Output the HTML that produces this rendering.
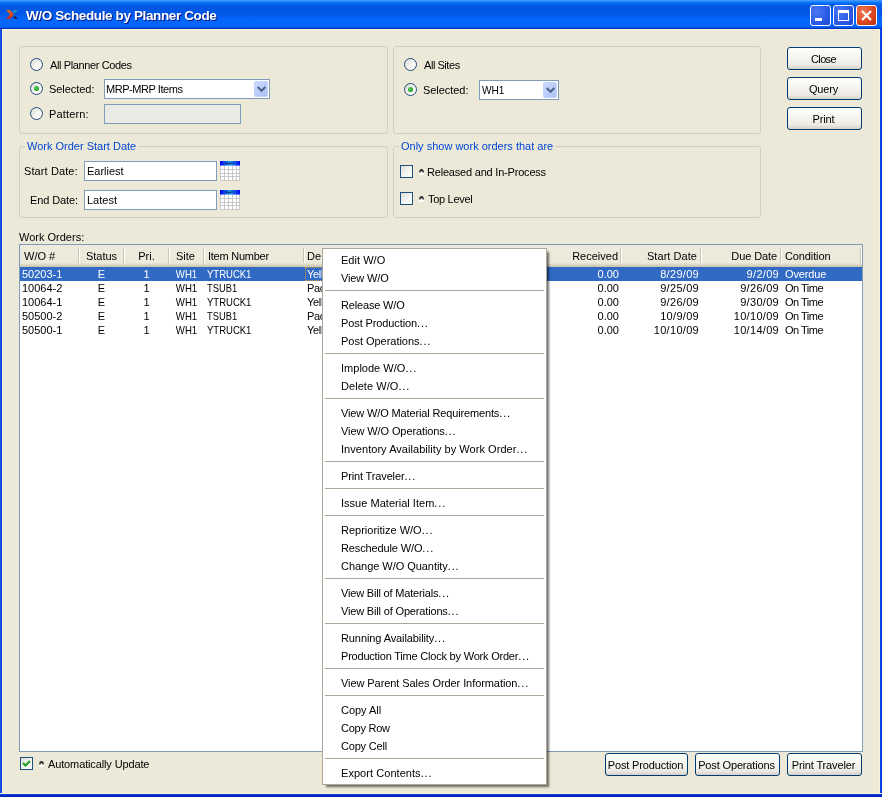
<!DOCTYPE html>
<html><head><meta charset="utf-8"><title>W/O Schedule by Planner Code</title>
<style>
*{box-sizing:border-box;margin:0;padding:0}
html,body{width:882px;height:797px;overflow:hidden}
body{background:#ECE9D8;font-family:"Liberation Sans","DejaVu Sans",sans-serif;font-size:11px;color:#000;position:relative;line-height:13px}
.abs,.t,.grp,.radio,.chk,.btn,.field,.combo,.hs{position:absolute}
.t{white-space:nowrap;height:13px;line-height:13px}
#title{left:0;top:0;width:882px;height:29px;position:absolute;
background:linear-gradient(to bottom,#4198FF 0px,#3E96FF 1px,#0A7BFF 2px,#056AF3 3.5px,#035CE6 5px,#0257E2 7px,#0259E8 14px,#0366FB 20px,#0367FD 26px,#0456E8 27.5px,#0234C4 28.5px,#0234C4 29px);}
#title .cap{position:absolute;left:26px;top:7px;font-weight:bold;font-size:13.5px;line-height:17px;color:#fff;letter-spacing:-0.38px;text-shadow:1px 1px 0 #0A1883;white-space:nowrap}
.bl{position:absolute;left:0;top:29px;width:3px;height:768px;background:linear-gradient(to right,#1C54E6 0,#1C54E6 1px,#0842E2 1px,#0842E2 2px,#F7F2D8 2px,#F7F2D8 3px)}
.br{position:absolute;left:879px;top:29px;width:3px;height:768px;background:linear-gradient(to right,#F7F2D8 0,#F7F2D8 1px,#0E4FE6 1px,#0831D9 3px)}
.bb{position:absolute;left:0;top:793px;width:882px;height:4px;background:linear-gradient(to bottom,#F7F2D8 0,#F7F2D8 1px,#0E4FE6 1px,#0831D9 2px,#001EA0 4px)}
.tb{position:absolute;top:5px;width:21px;height:21px;border:1px solid #fff;border-radius:3px;background:radial-gradient(circle at 30% 30%,#4A7AF2 0,#2A5AE4 60%,#1A46CE 100%)}
.tb.x{background:radial-gradient(circle at 30% 30%,#EC7A55 0,#D8441C 60%,#B8300E 100%)}
.grp{border:1px solid #D0D0BF;border-radius:3px}
.grp .gt{position:absolute;top:-7px;left:5px;background:#ECE9D8;padding:0 2px;color:#0046D5;height:13px;line-height:13px;white-space:nowrap}
.radio{width:13px;height:13px;border-radius:50%;border:1px solid #21497B;background:linear-gradient(135deg,#DCDCD5 0,#F6F6F2 55%,#fff 100%)}
.radio.on::after{content:"";position:absolute;left:3px;top:3px;width:5px;height:5px;border-radius:50%;background:radial-gradient(circle at 40% 40%,#5CD65C 0,#21A121 60%,#1A7E1A 100%)}
.chk{width:13px;height:13px;border:1px solid #1C5180;background:linear-gradient(135deg,#DCDCD7 0,#F3F3EF 50%,#fff 100%)}
.field{border:1px solid #7F9DB9;background:#fff;height:20px}
.field .t{left:2px;top:3px}
.combo{border:1px solid #7F9DB9;background:#fff;height:20px}
.combo .t{left:2px;top:3px}
.combo .dd{position:absolute;right:1px;top:1px;width:14px;height:16px;border-radius:2px;border:1px solid #C4D3FB;background:linear-gradient(135deg,#CCD9FD 0,#BDCDFB 50%,#ABC0F7 100%)}
.btn{height:23px;border:1px solid #003C74;border-radius:3px;background:linear-gradient(to bottom,#fff 0,#F7F6F1 40%,#ECEBE5 80%,#D6D0C5 100%);text-align:center;line-height:23px;white-space:nowrap;letter-spacing:-0.15px;padding-right:2px}
#tbl{position:absolute;left:19px;top:244px;width:844px;height:508px;border:1px solid #7F9DB9;background:#fff}
#hdr{position:absolute;left:0;top:0;width:842px;height:22px;background:linear-gradient(to bottom,#EBEADB 0,#EBEADB 18px,#E6E3D2 18px,#E6E3D2 19px,#DEDAC8 19px,#DEDAC8 20px,#D5D0BC 20px,#D5D0BC 21px,#CBC6B2 21px,#CBC6B2 22px)}
.hs{top:3px;width:2px;height:15px;background:linear-gradient(to right,#C7C5B2 0,#C7C5B2 1px,#fff 1px)}
.row{position:absolute;left:0;width:842px;height:14px}
.row .t{top:1px}
.row .sq{transform-origin:0 50%}
.row.sel{background:#316AC5;color:#fff}
#menu{position:absolute;left:322px;top:248px;width:225px;height:537px;background:#fff;border:1px solid #ACA899;box-shadow:3px 3px 2px -1px rgba(0,0,0,.55);padding:2px 0}
#menu .mi{height:18px;line-height:18px;padding-left:18px;white-space:nowrap}
#menu .e{letter-spacing:.85px}
#menu .ms{height:9px;position:relative}
#menu .ms::after{content:"";position:absolute;left:2px;right:2px;top:3px;height:1px;background:#ACA899}
</style></head><body><div id="all" style="position:absolute;left:0;top:0;width:882px;height:797px;will-change:transform">
<div id="title">
<svg class="abs" style="left:5px;top:9px" width="14" height="11" viewBox="0 0 14 11"><defs><linearGradient id="g1" x1="0" y1="0" x2="0" y2="1"><stop offset="0" stop-color="#DC701C"/><stop offset="1" stop-color="#C8221C"/></linearGradient></defs><path d="M1 1 L5 1 L9 5.5 L5 10 L1 10 L5 5.5 Z" fill="url(#g1)"/><path d="M9 1 L13 1 L9.8 4.6 L7.8 2.4 Z" fill="#1890AC"/><path d="M7.8 8.6 L9.8 6.4 L13 10 L9 10 Z" fill="#0C2870"/></svg>
<div class="cap">W/O Schedule by Planner Code</div>
<div class="tb" style="left:810px"><div class="abs" style="left:4px;top:12px;width:7px;height:3px;background:#fff"></div></div>
<div class="tb" style="left:833px"><div class="abs" style="left:4px;top:4px;width:11px;height:11px;border:1px solid #fff;border-top-width:3px"></div></div>
<div class="tb x" style="left:856px"><svg class="abs" style="left:3px;top:3px" width="13" height="13" viewBox="0 0 13 13"><path d="M2 2 L11 11 M11 2 L2 11" stroke="#fff" stroke-width="2.2"/></svg></div>
</div>
<div class="abs" style="left:2px;top:29px;width:878px;height:1px;background:#F7F2D8"></div><div class="bl"></div><div class="br"></div><div class="bb"></div>

<!-- group 1 -->
<div class="grp" style="left:19px;top:46px;width:369px;height:88px"></div>
<div class="radio" style="left:30px;top:58px"></div><div class="t" style="left:50px;top:59px;letter-spacing:-0.38px">All Planner Codes</div>
<div class="radio on" style="left:30px;top:82px"></div><div class="t" style="left:49px;top:83px;letter-spacing:-0.05px">Selected:</div>
<div class="radio" style="left:30px;top:107px"></div><div class="t" style="left:49px;top:108px;letter-spacing:0.15px">Pattern:</div>
<div class="combo" style="left:104px;top:79px;width:166px"><div class="t" style="left:1px;letter-spacing:-0.45px">MRP-MRP Items</div><div class="dd"><svg class="abs" style="left:2px;top:4px" width="9" height="6" viewBox="0 0 9 6"><path d="M0.7 1 L4.5 4.8 L8.3 1" stroke="#4D6185" stroke-width="2" fill="none"/></svg></div></div>
<div class="field" style="left:104px;top:104px;width:137px;background:#EBEAE4"></div>

<!-- group 2 -->
<div class="grp" style="left:393px;top:46px;width:368px;height:88px"></div>
<div class="radio" style="left:404px;top:58px"></div><div class="t" style="left:424px;top:59px;letter-spacing:-0.45px">All Sites</div>
<div class="radio on" style="left:404px;top:83px"></div><div class="t" style="left:423px;top:84px;letter-spacing:-0.05px">Selected:</div>
<div class="combo" style="left:479px;top:80px;width:80px"><div class="t" style="transform:scaleX(.915);transform-origin:0 50%">WH1</div><div class="dd"><svg class="abs" style="left:2px;top:4px" width="9" height="6" viewBox="0 0 9 6"><path d="M0.7 1 L4.5 4.8 L8.3 1" stroke="#4D6185" stroke-width="2" fill="none"/></svg></div></div>

<div class="btn" style="left:787px;top:47px;width:75px;letter-spacing:-0.65px">Close</div>
<div class="btn" style="left:787px;top:77px;width:75px">Query</div>
<div class="btn" style="left:787px;top:107px;width:75px">Print</div>

<!-- group 3 -->
<div class="grp" style="left:19px;top:146px;width:369px;height:72px"><div class="gt">Work Order Start Date</div></div>
<div class="t" style="left:24px;top:165px;letter-spacing:0.1px">Start Date:</div>
<div class="field" style="left:84px;top:161px;width:133px"><div class="t">Earliest</div></div>
<div class="t" style="left:30px;top:194px;letter-spacing:-0.1px">End Date:</div>
<div class="field" style="left:84px;top:190px;width:133px"><div class="t">Latest</div></div>
<svg class="abs cal" style="left:220px;top:161px" width="20" height="20" viewBox="0 0 20 20"><defs><linearGradient id="cg" x1="0" y1="0" x2="1" y2="0"><stop offset="0" stop-color="#0000EE"/><stop offset="0.5" stop-color="#1E9CE4"/><stop offset="1" stop-color="#0000EE"/></linearGradient></defs><rect x="0" y="0" width="20" height="20" fill="#fff"/><rect x="0" y="0" width="20" height="4.6" fill="url(#cg)"/><path d="M5 2.2 h3 l1 .8 l2 -1 h3" stroke="#0A1A6A" stroke-width="1.2" fill="none" opacity=".7"/><path d="M0.5 5 V19.5 H19.5 V5 M4.5 5 V19.5 M8.5 5 V19.5 M12.5 5 V19.5 M16.5 5 V19.5 M0 8.5 H20 M0 12.5 H20 M0 15.5 H20" stroke="#C2C2C2" stroke-width="0.9" fill="none"/></svg>
<svg class="abs cal" style="left:220px;top:190px" width="20" height="20" viewBox="0 0 20 20"><rect x="0" y="0" width="20" height="20" fill="#fff"/><rect x="0" y="0" width="20" height="4.6" fill="url(#cg)"/><path d="M5 2.2 h3 l1 .8 l2 -1 h3" stroke="#0A1A6A" stroke-width="1.2" fill="none" opacity=".7"/><path d="M0.5 5 V19.5 H19.5 V5 M4.5 5 V19.5 M8.5 5 V19.5 M12.5 5 V19.5 M16.5 5 V19.5 M0 8.5 H20 M0 12.5 H20 M0 15.5 H20" stroke="#C2C2C2" stroke-width="0.9" fill="none"/></svg>

<!-- group 4 -->
<div class="grp" style="left:393px;top:146px;width:368px;height:72px"><div class="gt">Only show work orders that are</div></div>
<div class="chk" style="left:400px;top:165px"></div><svg class="abs" style="left:419px;top:169px" width="5" height="6" viewBox="0 0 5 6"><rect x="0.2" y="2.6" width="4.6" height="3.4" rx="1.6" fill="#fff"/><path d="M0.1 3.6 Q0.1 0.1 2.5 0.1 Q4.9 0.1 4.9 3.6 L3.5 3.6 Q3.5 2.2 2.5 2.2 Q1.5 2.2 1.5 3.6 Z" fill="#2E2E2E"/></svg><div class="t" style="left:427px;top:166px;letter-spacing:-0.2px">Released and In-Process</div>
<div class="chk" style="left:400px;top:192px"></div><svg class="abs" style="left:419px;top:196px" width="5" height="6" viewBox="0 0 5 6"><rect x="0.2" y="2.6" width="4.6" height="3.4" rx="1.6" fill="#fff"/><path d="M0.1 3.6 Q0.1 0.1 2.5 0.1 Q4.9 0.1 4.9 3.6 L3.5 3.6 Q3.5 2.2 2.5 2.2 Q1.5 2.2 1.5 3.6 Z" fill="#2E2E2E"/></svg><div class="t" style="left:428px;top:193px;letter-spacing:-0.3px">Top Level</div>

<div class="t" style="left:19px;top:231px">Work Orders:</div>

<div id="tbl">
<div id="hdr">
<div class="t" style="left:4px;top:5px">W/O #</div>
<div class="t" style="left:60px;width:43px;text-align:center;top:5px">Status</div>
<div class="t" style="left:105px;width:43px;text-align:center;top:5px">Pri.</div>
<div class="t" style="left:149px;width:33px;text-align:center;top:5px">Site</div>
<div class="t" style="left:188px;top:5px;letter-spacing:-0.25px">Item Number</div>
<div class="t" style="left:287px;top:5px">De</div>
<div class="t" style="left:500px;width:98px;text-align:right;top:5px">Received</div>
<div class="t" style="left:600px;width:77px;text-align:right;top:5px;letter-spacing:0.05px">Start Date</div>
<div class="t" style="left:680px;width:77px;text-align:right;top:5px;letter-spacing:-0.1px">Due Date</div>
<div class="t" style="left:765px;top:5px;letter-spacing:-0.12px">Condition</div>
<div class="hs" style="left:58px"></div><div class="hs" style="left:103px"></div><div class="hs" style="left:148px"></div><div class="hs" style="left:183px"></div><div class="hs" style="left:283px"></div><div class="hs" style="left:600px"></div><div class="hs" style="left:680px"></div><div class="hs" style="left:760px"></div><div class="hs" style="left:840px"></div>
</div>
<div class="row sel" style="top:22px"><div class="abs" style="left:285px;top:0;width:236px;height:14px;border:1px dotted #D69A3C"></div><div class="t" style="left:2px">50203-1</div><div class="t" style="left:60px;width:43px;text-align:center">E</div><div class="t" style="left:105px;width:43px;text-align:center">1</div><div class="t" style="left:150px;width:33px;text-align:center;transform:scaleX(.875)">WH1</div><div class="t sq" style="left:187px;transform:scaleX(0.865)">YTRUCK1</div><div class="t foc" style="left:287px;letter-spacing:-0.3px">Yell</div><div class="t" style="left:500px;width:99px;text-align:right">0.00</div><div class="t" style="left:590px;width:89px;text-align:right;letter-spacing:0.3px">8/29/09</div><div class="t" style="left:670px;width:89px;text-align:right;letter-spacing:0.3px">9/2/09</div><div class="t" style="left:765px;letter-spacing:-0.15px">Overdue</div></div>
<div class="row" style="top:36px"><div class="t" style="left:2px">10064-2</div><div class="t" style="left:60px;width:43px;text-align:center">E</div><div class="t" style="left:105px;width:43px;text-align:center">1</div><div class="t" style="left:150px;width:33px;text-align:center;transform:scaleX(.875)">WH1</div><div class="t sq" style="left:187px;transform:scaleX(0.85)">TSUB1</div><div class="t" style="left:287px;letter-spacing:-0.3px">Pac</div><div class="t" style="left:500px;width:99px;text-align:right">0.00</div><div class="t" style="left:590px;width:89px;text-align:right;letter-spacing:0.3px">9/25/09</div><div class="t" style="left:670px;width:89px;text-align:right;letter-spacing:0.3px">9/26/09</div><div class="t" style="left:765px;letter-spacing:-0.5px">On Time</div></div>
<div class="row" style="top:50px"><div class="t" style="left:2px">10064-1</div><div class="t" style="left:60px;width:43px;text-align:center">E</div><div class="t" style="left:105px;width:43px;text-align:center">1</div><div class="t" style="left:150px;width:33px;text-align:center;transform:scaleX(.875)">WH1</div><div class="t sq" style="left:187px;transform:scaleX(0.865)">YTRUCK1</div><div class="t" style="left:287px;letter-spacing:-0.3px">Yell</div><div class="t" style="left:500px;width:99px;text-align:right">0.00</div><div class="t" style="left:590px;width:89px;text-align:right;letter-spacing:0.3px">9/26/09</div><div class="t" style="left:670px;width:89px;text-align:right;letter-spacing:0.3px">9/30/09</div><div class="t" style="left:765px;letter-spacing:-0.5px">On Time</div></div>
<div class="row" style="top:64px"><div class="t" style="left:2px">50500-2</div><div class="t" style="left:60px;width:43px;text-align:center">E</div><div class="t" style="left:105px;width:43px;text-align:center">1</div><div class="t" style="left:150px;width:33px;text-align:center;transform:scaleX(.875)">WH1</div><div class="t sq" style="left:187px;transform:scaleX(0.85)">TSUB1</div><div class="t" style="left:287px;letter-spacing:-0.3px">Pac</div><div class="t" style="left:500px;width:99px;text-align:right">0.00</div><div class="t" style="left:590px;width:89px;text-align:right;letter-spacing:0.3px">10/9/09</div><div class="t" style="left:670px;width:89px;text-align:right;letter-spacing:0.3px">10/10/09</div><div class="t" style="left:765px;letter-spacing:-0.5px">On Time</div></div>
<div class="row" style="top:78px"><div class="t" style="left:2px">50500-1</div><div class="t" style="left:60px;width:43px;text-align:center">E</div><div class="t" style="left:105px;width:43px;text-align:center">1</div><div class="t" style="left:150px;width:33px;text-align:center;transform:scaleX(.875)">WH1</div><div class="t sq" style="left:187px;transform:scaleX(0.865)">YTRUCK1</div><div class="t" style="left:287px;letter-spacing:-0.3px">Yell</div><div class="t" style="left:500px;width:99px;text-align:right">0.00</div><div class="t" style="left:590px;width:89px;text-align:right;letter-spacing:0.3px">10/10/09</div><div class="t" style="left:670px;width:89px;text-align:right;letter-spacing:0.3px">10/14/09</div><div class="t" style="left:765px;letter-spacing:-0.5px">On Time</div></div>
</div>

<div class="chk" style="left:20px;top:757px"><svg class="abs" style="left:-1px;top:-1px" width="13" height="13" viewBox="0 0 13 13"><path d="M3 6 L5.5 8.5 L10 4" stroke="#21A121" stroke-width="2.2" fill="none"/></svg></div>
<svg class="abs" style="left:39px;top:761px" width="5" height="6" viewBox="0 0 5 6"><rect x="0.2" y="2.6" width="4.6" height="3.4" rx="1.6" fill="#fff"/><path d="M0.1 3.6 Q0.1 0.1 2.5 0.1 Q4.9 0.1 4.9 3.6 L3.5 3.6 Q3.5 2.2 2.5 2.2 Q1.5 2.2 1.5 3.6 Z" fill="#2E2E2E"/></svg><div class="t" style="left:48px;top:758px;letter-spacing:-0.13px">Automatically Update</div>

<div class="btn" style="left:605px;top:753px;width:83px">Post Production</div>
<div class="btn" style="left:695px;top:753px;width:85px">Post Operations</div>
<div class="btn" style="left:787px;top:753px;width:75px">Print Traveler</div>

<div id="menu">
<div class="mi"><span class="m" style="letter-spacing:0.027px">Edit W/O</span></div>
<div class="mi"><span class="m" style="letter-spacing:-0.125px">View W/O</span></div>
<div class="ms"></div>
<div class="mi"><span class="m" style="letter-spacing:-0.165px">Release W/O</span></div>
<div class="mi"><span class="m" style="letter-spacing:-0.107px">Post Production</span><span class="e">...</span></div>
<div class="mi"><span class="m" style="letter-spacing:-0.026px">Post Operations</span><span class="e">...</span></div>
<div class="ms"></div>
<div class="mi"><span class="m" style="letter-spacing:0.017px">Implode W/O</span><span class="e">...</span></div>
<div class="mi"><span class="m" style="letter-spacing:0.060px">Delete W/O</span><span class="e">...</span></div>
<div class="ms"></div>
<div class="mi"><span class="m" style="letter-spacing:-0.139px">View W/O Material Requirements</span><span class="e">...</span></div>
<div class="mi"><span class="m" style="letter-spacing:-0.094px">View W/O Operations</span><span class="e">...</span></div>
<div class="mi"><span class="m" style="letter-spacing:0.044px">Inventory Availability by Work Order</span><span class="e">...</span></div>
<div class="ms"></div>
<div class="mi"><span class="m" style="letter-spacing:-0.143px">Print Traveler</span><span class="e">...</span></div>
<div class="ms"></div>
<div class="mi"><span class="m" style="letter-spacing:0.022px">Issue Material Item</span><span class="e">...</span></div>
<div class="ms"></div>
<div class="mi"><span class="m" style="letter-spacing:0.000px">Reprioritize W/O</span><span class="e">...</span></div>
<div class="mi"><span class="m" style="letter-spacing:-0.129px">Reschedule W/O</span><span class="e">...</span></div>
<div class="mi"><span class="m" style="letter-spacing:-0.042px">Change W/O Quantity</span><span class="e">...</span></div>
<div class="ms"></div>
<div class="mi"><span class="m" style="letter-spacing:-0.182px">View Bill of Materials</span><span class="e">...</span></div>
<div class="mi"><span class="m" style="letter-spacing:-0.165px">View Bill of Operations</span><span class="e">...</span></div>
<div class="ms"></div>
<div class="mi"><span class="m" style="letter-spacing:-0.100px">Running Availability</span><span class="e">...</span></div>
<div class="mi"><span class="m" style="letter-spacing:-0.205px">Production Time Clock by Work Order</span><span class="e">...</span></div>
<div class="ms"></div>
<div class="mi"><span class="m" style="letter-spacing:-0.074px">View Parent Sales Order Information</span><span class="e">...</span></div>
<div class="ms"></div>
<div class="mi"><span class="m" style="letter-spacing:-0.025px">Copy All</span></div>
<div class="mi"><span class="m" style="letter-spacing:-0.250px">Copy Row</span></div>
<div class="mi"><span class="m" style="letter-spacing:-0.201px">Copy Cell</span></div>
<div class="ms"></div>
<div class="mi"><span class="m" style="letter-spacing:0.053px">Export Contents</span><span class="e">...</span></div>
</div>
</div></body></html>
